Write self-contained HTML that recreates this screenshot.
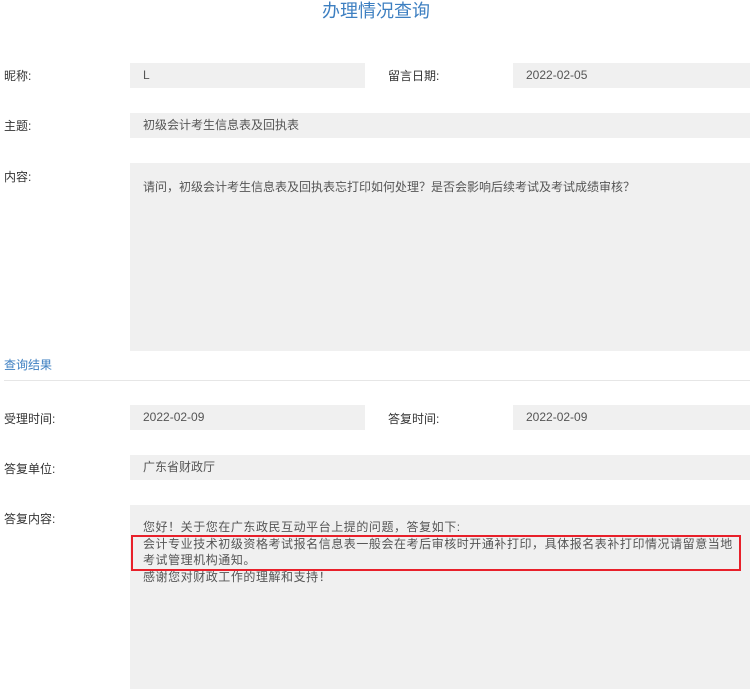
<!DOCTYPE html>
<html><head><meta charset="utf-8"><style>
body{margin:0;width:750px;height:689px;background:#fff;position:relative;overflow:hidden;font-family:"Liberation Sans","Noto Sans CJK SC",sans-serif;font-size:12px;color:#333}
.a{position:absolute}
.t{left:0;width:752px;text-align:center;top:-3px;font-size:18px;color:#3d7fc1}
.l{left:4px;color:#333;font-size:12px}
.b{background:#f0f0f0;color:#555;padding-left:13px;box-sizing:border-box;line-height:25px}
</style></head><body>
<div class="a t">办理情况查询</div>
<div class="a l" style="top:67px">昵称:</div>
<div class="a b" style="left:130px;top:63px;width:235px;height:25px">L</div>
<div class="a l" style="left:388px;top:67px">留言日期:</div>
<div class="a b" style="left:513px;top:63px;width:237px;height:25px">2022-02-05</div>
<div class="a l" style="top:117px">主题:</div>
<div class="a b" style="left:130px;top:113px;width:620px;height:25px">初级会计考生信息表及回执表</div>
<div class="a l" style="top:168px">内容:</div>
<div class="a b" style="left:130px;top:163px;width:620px;height:188px;padding-top:12px">请问，初级会计考生信息表及回执表忘打印如何处理？是否会影响后续考试及考试成绩审核？</div>
<div class="a" style="left:4px;top:356px;color:#3d7fc1">查询结果</div>
<div class="a" style="left:4px;top:380px;width:746px;height:1px;background:#e6e6e6"></div>
<div class="a l" style="top:410px">受理时间:</div>
<div class="a b" style="left:130px;top:405px;width:235px;height:25px">2022-02-09</div>
<div class="a l" style="left:388px;top:410px">答复时间:</div>
<div class="a b" style="left:513px;top:405px;width:237px;height:25px">2022-02-09</div>
<div class="a l" style="top:460px">答复单位:</div>
<div class="a b" style="left:130px;top:455px;width:620px;height:25px">广东省财政厅</div>
<div class="a l" style="top:510px">答复内容:</div>
<div class="a b" style="left:130px;top:505px;width:620px;height:184px;padding-top:14px;line-height:16.7px;padding-right:5px;letter-spacing:0.55px;white-space:nowrap">您好！关于您在广东政民互动平台上提的问题，答复如下:<br>会计专业技术初级资格考试报名信息表一般会在考后审核时开通补打印，具体报名表补打印情况请留意当地<br>考试管理机构通知。<br>感谢您对财政工作的理解和支持！</div>
<div class="a" style="left:131px;top:535px;width:606px;height:32px;border:2px solid #e8202a"></div>
</body></html>
